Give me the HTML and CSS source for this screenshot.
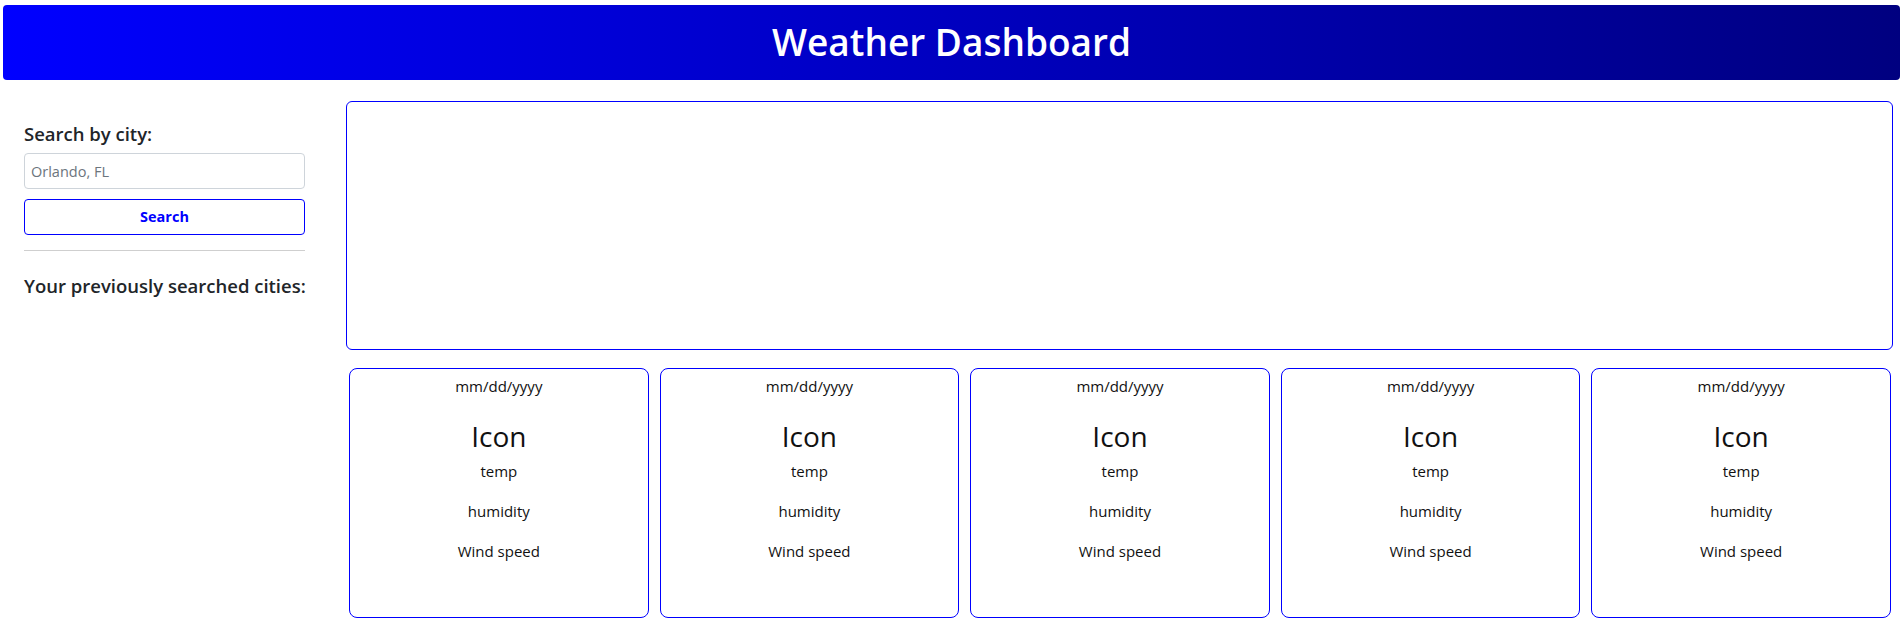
FILE: index.html
```html
<!DOCTYPE html>
<html lang="en">
<head>
<meta charset="utf-8">
<title>Weather Dashboard</title>
<link rel="stylesheet" href="styles.css">
</head>
<body>
<header class="banner">
  <h1 class="banner-title">Weather Dashboard</h1>
</header>
<div class="layout">
  <aside class="sidebar">
    <h2 class="side-heading">Search by city:</h2>
    <input class="city-input" type="text" placeholder="Orlando, FL">
    <button class="search-btn" type="button">Search</button>
    <hr class="divider">
    <h2 class="side-heading history-heading">Your previously searched cities:</h2>
  </aside>
  <main class="main">
    <section class="current"></section>
    <section class="forecast">
      <div class="card"><p class="date">mm/dd/yyyy</p><h3 class="icon">Icon</h3><p class="stat">temp</p><p class="stat">humidity</p><p class="stat">Wind speed</p></div>
      <div class="card"><p class="date">mm/dd/yyyy</p><h3 class="icon">Icon</h3><p class="stat">temp</p><p class="stat">humidity</p><p class="stat">Wind speed</p></div>
      <div class="card"><p class="date">mm/dd/yyyy</p><h3 class="icon">Icon</h3><p class="stat">temp</p><p class="stat">humidity</p><p class="stat">Wind speed</p></div>
      <div class="card"><p class="date">mm/dd/yyyy</p><h3 class="icon">Icon</h3><p class="stat">temp</p><p class="stat">humidity</p><p class="stat">Wind speed</p></div>
      <div class="card"><p class="date">mm/dd/yyyy</p><h3 class="icon">Icon</h3><p class="stat">temp</p><p class="stat">humidity</p><p class="stat">Wind speed</p></div>
    </section>
  </main>
</div>
</body>
</html>
```

FILE: styles.css
```css
* { box-sizing: border-box; }
html, body { margin: 0; padding: 0; }
body {
  font-family: "Open Sans", "Noto Sans", sans-serif;
  font-size: 16px;
  line-height: 1.5;
  color: #212529;
  background: #fff;
}
.banner {
  margin: 5px 4px 0 3px;
  height: 75px;
  border-radius: 4px;
  background: linear-gradient(to right, #0000ff, #000080);
  display: flex;
  align-items: center;
  justify-content: center;
}
.banner-title {
  margin: 0;
  color: #fff;
  font-size: 37px;
  font-weight: 600;
  line-height: 1.2;
}
.layout {
  display: flex;
  padding: 21px 11px 0 24px;
  gap: 41px;
}
.sidebar {
  width: 281px;
  flex: none;
  padding-top: 21px;
}
.side-heading {
  margin: 0 0 7px;
  font-size: 18.5px;
  font-weight: 600;
  line-height: 24px;
  white-space: nowrap;
}
.city-input {
  display: block;
  width: 100%;
  height: 36px;
  padding: 4px 6px;
  font: inherit;
  font-size: 14.5px;
  border: 1px solid #ced4da;
  border-radius: 4px;
  color: #212529;
}
.city-input::placeholder { color: #6c757d; }
.search-btn {
  display: block;
  width: 100%;
  height: 36px;
  margin-top: 10px;
  background: #fff;
  border: 1px solid #0000ff;
  border-radius: 4px;
  color: #0000ff;
  font: inherit;
  font-size: 14.5px;
  font-weight: 700;
}
.divider {
  margin: 15px 0 23px;
  border: 0;
  border-top: 1px solid #cfcfcf;
}
.main {
  flex: 1;
  min-width: 0;
}
.current {
  height: 249px;
  border: 1px solid #0000ff;
  border-radius: 6px;
}
.forecast {
  display: flex;
  gap: 11px;
  margin: 18px 2px 0 3px;
}
.card {
  flex: 1;
  height: 250px;
  border: 1px solid #0000ff;
  border-radius: 8px;
  text-align: center;
  padding-top: 5px;
  color: #111;
}
.date {
  margin: 0 0 19px;
  font-size: 15px;
  line-height: 24px;
}
.icon {
  margin: 0 0 4px;
  font-size: 28px;
  font-weight: 400;
  line-height: 38px;
}
.stat {
  margin: 0 0 16px;
  font-size: 15px;
  line-height: 24px;
}
```
